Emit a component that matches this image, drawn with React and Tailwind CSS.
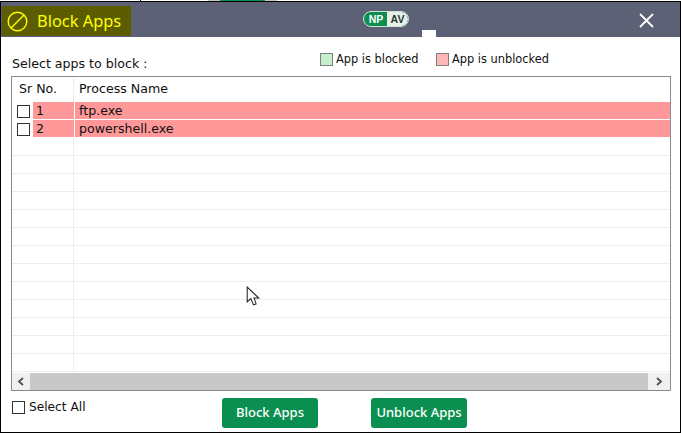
const empties = Array.from({ length: 13 });
const text = "font-['DejaVu_Sans',sans-serif]";

function Row({ n, name }) {
  return (
    <div className="flex h-[18px] shrink-0">
      <div className="flex w-[21px] shrink-0 items-center pl-[5px]">
        <div className="h-[13px] w-[13px] border border-[#333333] bg-white" />
      </div>
      <div className="flex w-[41px] shrink-0 items-center border-b border-white bg-[#ff9999] pl-[3px] pt-[1px]">{n}</div>
      <div className="flex flex-1 items-center border-b border-l border-white bg-[#ff9999] pl-[4px] pt-[1px]">{name}</div>
    </div>
  );
}

function EmptyRow() {
  return (
    <div className="flex h-[18px] shrink-0 border-b border-[#eeeeee]">
      <div className="w-[62px] shrink-0 border-r border-[#eeeeee]" />
      <div className="flex-1" />
    </div>
  );
}

function Legend({ color, label, width }) {
  return (
    <div className="flex items-center gap-[3px]" style={{ width }}>
      <div className={`h-[13px] w-[13px] border border-[#808080] ${color}`} />
      <span className="pt-[1px]">{label}</span>
    </div>
  );
}

function GreenButton({ children }) {
  return (
    <button className="h-[30px] w-[96px] rounded-[3px] bg-[#0a8f50] font-['Noto_Sans',sans-serif] text-[13px] font-medium text-white">
      {children}
    </button>
  );
}

export default function App() {
  return (
    <div className={`h-[435px] w-[681px] overflow-hidden bg-white ${text} text-[12.6px] text-[#111111]`}>
      <div className="flex h-[1px]">
        <div className="ml-[140px] w-[1px] bg-black" />
        <div className="ml-[67px] w-[12px] bg-[#c8c8c8]" />
        <div className="w-[45px] bg-[#0a8f50]" />
        <div className="w-[12px] bg-[#c8c8c8]" />
      </div>
      <div className="flex h-[432px] w-[681px] flex-col border border-black">
        <div className="flex h-[35px] shrink-0 items-start bg-[#5c6175] pl-[1px]">
          <div className="mt-[4px] flex h-[30px] w-[129px] shrink-0 items-center gap-[9px] bg-[#5c5c00] pl-[5px] text-[16.4px] text-[#ffff00]">
            <svg width="21" height="21" viewBox="0 0 21 21" fill="none" stroke="#ffff00" strokeWidth="1.4">
              <circle cx="10.5" cy="10.5" r="9.3" />
              <path d="M4 17 L17 4" />
            </svg>
            <span className="font-['Noto_Sans',sans-serif]">Block Apps</span>
          </div>
          <div className="ml-[232px] mt-[9px] flex h-[16px] w-[46px] shrink-0 items-center overflow-hidden rounded-full border border-[#cfe5d8] bg-[#0a8f50] font-['Liberation_Sans',sans-serif] text-[10.5px] font-bold leading-none">
            <span className="w-[23px] pl-[1px] text-center text-white">NP</span>
            <span className="flex h-[14px] flex-1 items-center justify-center rounded-l-[4px] rounded-r-full bg-[#e9efec] text-[#2a3a30]">AV</span>
          </div>
          <div className="ml-[13px] mt-[28px] h-[7px] w-[14px] shrink-0 bg-white" />
          <svg className="ml-[203px] mt-[11px] shrink-0" width="15" height="15" viewBox="0 0 15 15" stroke="#ffffff" strokeWidth="1.8">
            <path d="M1 1 L14 14 M14 1 L1 14" />
          </svg>
        </div>

        <div className="relative flex min-h-0 flex-1 flex-col pl-[10px] pr-[9px]">
          <div className="flex h-[39px] shrink-0 justify-between">
            <div className="pt-[18px] pl-[1px]">Select apps to block :</div>
            <div className="flex h-[30px] pr-[122px] pt-[15px] text-[11.4px]">
              <Legend color="bg-[#c6efce]" label="App is blocked" width={116} />
              <Legend color="bg-[#ffb6b6]" label="App is unblocked" />
            </div>
          </div>

          <div className="flex h-[315px] shrink-0 flex-col border border-[#8a8a92]">
            <div className="flex h-[25px] shrink-0">
              <div className="flex w-[62px] shrink-0 items-center border-r border-[#eeeeee] pl-[7px]">Sr No.</div>
              <div className="flex flex-1 items-center pl-[5px]">Process Name</div>
            </div>
            <div className="min-h-0 flex-1 overflow-hidden">
              <Row n="1" name="ftp.exe" />
              <Row n="2" name="powershell.exe" />
              {empties.map((_, i) => (
                <EmptyRow key={i} />
              ))}
            </div>
            <div className="flex h-[17px] shrink-0 bg-[#f0f0f0]">
              <div className="flex w-[18px] items-center justify-center">
                <svg width="8" height="9" viewBox="0 0 8 9" fill="none" stroke="#505050" strokeWidth="1.8"><path d="M6 1 L2 4.5 L6 8" /></svg>
              </div>
              <div className="w-[618px] bg-[#c8c8c8]" />
              <div className="flex flex-1 items-center justify-center">
                <svg width="8" height="9" viewBox="0 0 8 9" fill="none" stroke="#505050" strokeWidth="1.8"><path d="M2 1 L6 4.5 L2 8" /></svg>
              </div>
            </div>
          </div>

          <div className="flex flex-1 items-start">
            <div className="mt-[7px] flex w-[211px] items-center gap-[4px] pl-[1px] text-[12.2px]">
              <div className="h-[13px] w-[13px] border border-[#333333] bg-white" />
              <span>Select All</span>
            </div>
            <div className="mt-[7px]"><GreenButton>Block Apps</GreenButton></div>
            <div className="ml-[53px] mt-[7px]"><GreenButton>Unblock Apps</GreenButton></div>
          </div>

          <svg className="absolute left-[245px] top-[249px]" width="15" height="21" viewBox="0 0 14 20" fill="#ffffff" stroke="#222222" strokeWidth="1">
            <path d="M1 1 L1 15 L4.5 12 L7 18 L9.5 17 L7.5 11.5 L12 11.5 Z" />
          </svg>
        </div>
      </div>
    </div>
  );
}
